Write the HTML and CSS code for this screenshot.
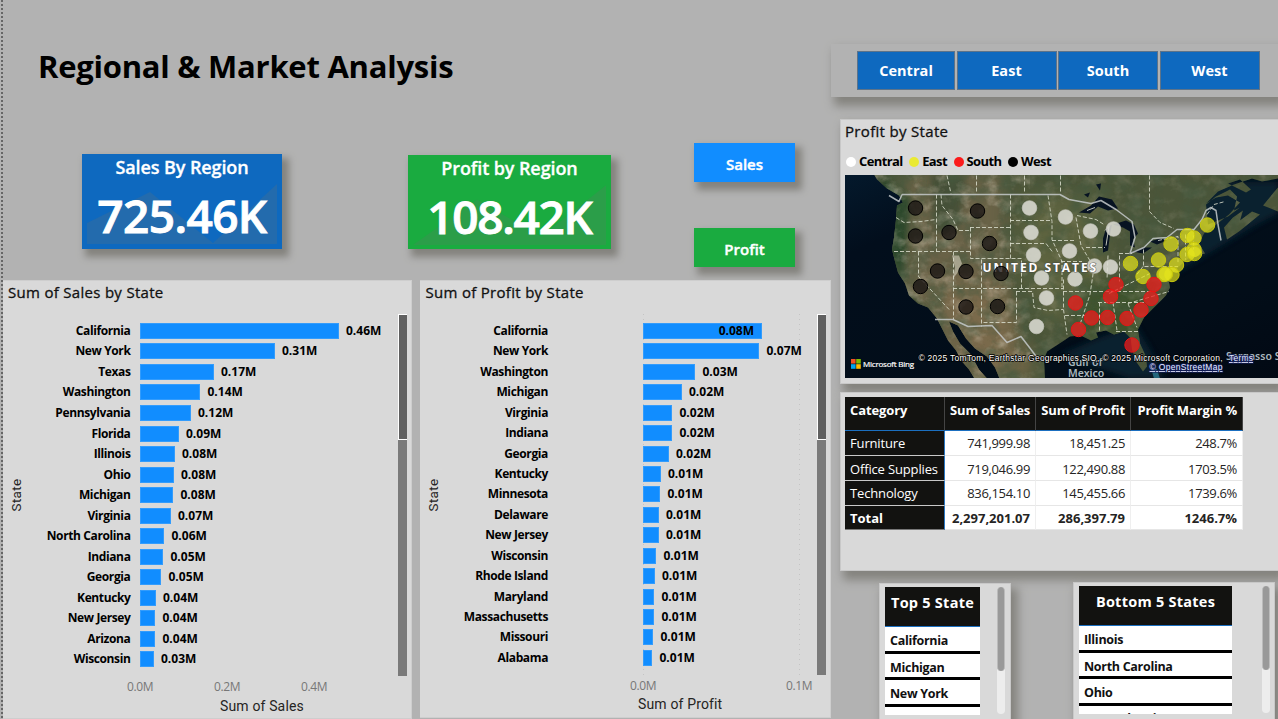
FILE: index.html
```html
<!DOCTYPE html>
<html lang="en">
<head>
<meta charset="utf-8">
<title>Regional &amp; Market Analysis</title>
<link rel="stylesheet" href="styles.css">
</head>
<body>
<div class="report">
  <main class="left">
    <header class="top">
      <h1 class="title">Regional &amp; Market Analysis</h1>
      <div class="kpis">
        <section class="kpi kpi-sales">
          <svg class="trend" viewBox="0 0 200 95" preserveAspectRatio="none"><path d="M5 69 L68 38 L131 89 L195 30 V90 H5Z" fill="#236bad"/></svg>
          <h2 class="kpi-name">Sales By Region</h2>
          <p class="kpi-value">725.46K</p>
        </section>
        <section class="kpi kpi-profit">
          <svg class="trend" viewBox="0 0 203 94" preserveAspectRatio="none"><path d="M5 89 L69 44 L133 81 L198 30 V89Z" fill="#2b9e49"/></svg>
          <h2 class="kpi-name">Profit by Region</h2>
          <p class="kpi-value">108.42K</p>
        </section>
        <nav class="switches">
          <a class="switch switch-sales">Sales</a>
          <a class="switch switch-profit">Profit</a>
        </nav>
      </div>
    </header>
    <div class="charts">
      <section class="chart chart-sales">
        <h2 class="panel-title">Sum of Sales by State</h2>
        <div class="plot">
          <div class="y-name"><span>State</span></div>
          <div class="rows">
            <div class="row"><span class="state">California</span><i class="bar" style="width:199px"></i><b class="num">0.46M</b></div>
            <div class="row"><span class="state">New York</span><i class="bar" style="width:135px"></i><b class="num">0.31M</b></div>
            <div class="row"><span class="state">Texas</span><i class="bar" style="width:74px"></i><b class="num">0.17M</b></div>
            <div class="row"><span class="state">Washington</span><i class="bar" style="width:60.5px"></i><b class="num">0.14M</b></div>
            <div class="row"><span class="state">Pennsylvania</span><i class="bar" style="width:51px"></i><b class="num">0.12M</b></div>
            <div class="row"><span class="state">Florida</span><i class="bar" style="width:39px"></i><b class="num">0.09M</b></div>
            <div class="row"><span class="state">Illinois</span><i class="bar" style="width:35px"></i><b class="num">0.08M</b></div>
            <div class="row"><span class="state">Ohio</span><i class="bar" style="width:34px"></i><b class="num">0.08M</b></div>
            <div class="row"><span class="state">Michigan</span><i class="bar" style="width:33.5px"></i><b class="num">0.08M</b></div>
            <div class="row"><span class="state">Virginia</span><i class="bar" style="width:31px"></i><b class="num">0.07M</b></div>
            <div class="row"><span class="state">North Carolina</span><i class="bar" style="width:24.5px"></i><b class="num">0.06M</b></div>
            <div class="row"><span class="state">Indiana</span><i class="bar" style="width:23.5px"></i><b class="num">0.05M</b></div>
            <div class="row"><span class="state">Georgia</span><i class="bar" style="width:21.5px"></i><b class="num">0.05M</b></div>
            <div class="row"><span class="state">Kentucky</span><i class="bar" style="width:16px"></i><b class="num">0.04M</b></div>
            <div class="row"><span class="state">New Jersey</span><i class="bar" style="width:15.5px"></i><b class="num">0.04M</b></div>
            <div class="row"><span class="state">Arizona</span><i class="bar" style="width:15.5px"></i><b class="num">0.04M</b></div>
            <div class="row"><span class="state">Wisconsin</span><i class="bar" style="width:14px"></i><b class="num">0.03M</b></div>
          </div>
          <div class="scroll"><div class="thumb"></div></div>
        </div>
        <div class="ticks"><span>0.0M</span><span>0.2M</span><span>0.4M</span></div>
        <div class="x-name">Sum of Sales</div>
      </section>
      <section class="chart chart-profit">
        <h2 class="panel-title">Sum of Profit by State</h2>
        <div class="plot">
          <div class="y-name"><span>State</span></div>
          <div class="rows">
            <div class="row"><span class="state">California</span><i class="bar bar-labelled" style="width:119px"><b class="num">0.08M</b></i></div>
            <div class="row"><span class="state">New York</span><i class="bar" style="width:116px"></i><b class="num">0.07M</b></div>
            <div class="row"><span class="state">Washington</span><i class="bar" style="width:52px"></i><b class="num">0.03M</b></div>
            <div class="row"><span class="state">Michigan</span><i class="bar" style="width:38.5px"></i><b class="num">0.02M</b></div>
            <div class="row"><span class="state">Virginia</span><i class="bar" style="width:29px"></i><b class="num">0.02M</b></div>
            <div class="row"><span class="state">Indiana</span><i class="bar" style="width:29px"></i><b class="num">0.02M</b></div>
            <div class="row"><span class="state">Georgia</span><i class="bar" style="width:25.5px"></i><b class="num">0.02M</b></div>
            <div class="row"><span class="state">Kentucky</span><i class="bar" style="width:17.5px"></i><b class="num">0.01M</b></div>
            <div class="row"><span class="state">Minnesota</span><i class="bar" style="width:17px"></i><b class="num">0.01M</b></div>
            <div class="row"><span class="state">Delaware</span><i class="bar" style="width:15.5px"></i><b class="num">0.01M</b></div>
            <div class="row"><span class="state">New Jersey</span><i class="bar" style="width:15.5px"></i><b class="num">0.01M</b></div>
            <div class="row"><span class="state">Wisconsin</span><i class="bar" style="width:13px"></i><b class="num">0.01M</b></div>
            <div class="row"><span class="state">Rhode Island</span><i class="bar" style="width:11.5px"></i><b class="num">0.01M</b></div>
            <div class="row"><span class="state">Maryland</span><i class="bar" style="width:11px"></i><b class="num">0.01M</b></div>
            <div class="row"><span class="state">Massachusetts</span><i class="bar" style="width:11px"></i><b class="num">0.01M</b></div>
            <div class="row"><span class="state">Missouri</span><i class="bar" style="width:10px"></i><b class="num">0.01M</b></div>
            <div class="row"><span class="state">Alabama</span><i class="bar" style="width:9px"></i><b class="num">0.01M</b></div>
          </div>
          <div class="scroll"><div class="thumb"></div></div>
        </div>
        <div class="ticks"><span>0.0M</span><span>0.1M</span></div>
        <div class="x-name">Sum of Profit</div>
      </section>
    </div>
  </main>

  <aside class="right">
    <nav class="slicer">
      <a class="tile">Central</a><a class="tile">East</a><a class="tile">South</a><a class="tile">West</a>
    </nav>
    <section class="panel map-panel">
      <h2 class="panel-title">Profit by State</h2>
      <ul class="legend">
        <li class="key-central">Central</li><li class="key-east">East</li><li class="key-south">South</li><li class="key-west">West</li>
      </ul>
      <svg class="map" viewBox="845 175.500 433 203" width="433" height="203">
        <defs>
          <filter id="terrain" x="0" y="0" width="100%" height="100%">
            <feTurbulence type="fractalNoise" baseFrequency=".055 .06" numOctaves="5" seed="11"/>
            <feColorMatrix values="0 0 0 0 .06  0 0 0 0 .1  0 0 0 0 .05  2.2 0 0 0 -.85"/>
          </filter>
          <filter id="dust" x="0" y="0" width="100%" height="100%">
            <feTurbulence type="fractalNoise" baseFrequency=".07 .08" numOctaves="4" seed="4"/>
            <feColorMatrix values="0 0 0 0 .6  0 0 0 0 .54  0 0 0 0 .42  0 2.4 0 0 -1.1"/>
          </filter>
          <filter id="soft"><feGaussianBlur stdDeviation="9"/></filter>
          <filter id="coast"><feGaussianBlur stdDeviation="3"/></filter>
          <linearGradient id="sea" x1="0" y1="0" x2="1" y2="1">
            <stop offset="0" stop-color="#04192c"/><stop offset=".2" stop-color="#020e1c"/><stop offset=".75" stop-color="#020d18"/><stop offset="1" stop-color="#020914"/>
          </linearGradient>
          <path id="landshape" d="M871 170 L877 180 L887 189 L899 196 L903 203 L897 206 L896 220 L894 238 L892 250 L895 262 L898 273 L905 284 L909 296 L918 304 L928 308 L937 319 L942 329 L948 341 L956 351 L962 362 L969 370 L975 380 H988 L979 370 L970 354 L960 344 L953 332 L949 322 L958 326 L966 339 L975 349 L987 357 L995 368 L1000 380 H1045 L1044 360 L1047 352 L1058 345 L1070 337 L1081 336 L1091 341 L1098 338 L1096 333 L1106 331 L1114 335 L1124 332 L1131 339 L1132 350 L1136 362 L1143 372 L1147 367 L1146 357 L1140 344 L1138 330 L1144 318 L1153 309 L1166 296 L1170 288 L1168 278 L1178 268 L1188 259 L1205 254 L1199 244 L1204 234 L1215 226 L1229 215 L1240 203 L1228 196 L1216 198 L1206 204 L1218 192 L1234 185 L1252 179 L1262 182 L1278 179 V170Z M1224 228 L1233 218 L1243 211 L1240 221 L1252 212 L1260 215 L1239 232 L1227 240Z M1216 197 L1230 190 L1237 197 L1234 211 L1240 208 L1228 217 L1208 225 L1206 205Z M1228 184 L1240 180 L1251 190 L1246 193Z M1263 206 L1278 188 V212Z"/>
          <clipPath id="land"><use href="#landshape"/></clipPath>
        </defs>
        <rect x="845" y="175" width="433" height="204" fill="url(#sea)"/>
        <path d="M1175 274 L1205 256 L1255 226 L1278 214 V182 H1200Z M1135 325 L1150 350 L1165 379 H1130 L1060 355 L1100 338Z" fill="#0a2735" opacity=".8" filter="url(#coast)"/>
        <path d="M1150 365 L1157 370 L1160 379 H1154Z" fill="#2f86a0" opacity=".7"/>
        <use href="#landshape" fill="#4b5539"/>
        <g clip-path="url(#land)">
          <path d="M905 170 H1005 L1012 379 H950 L900 290Z" fill="#77694e" opacity=".7" filter="url(#soft)"/>
          <path d="M925 280 H1000 L1040 379 H980Z" fill="#86704f" opacity=".6" filter="url(#soft)"/>
          <path d="M880 176 L910 200 L902 290 L940 318 L908 300 L888 250Z" fill="#2a4629" filter="url(#coast)"/>
          <path d="M930 176 L965 176 L960 225 L935 235Z" fill="#394a30" opacity=".7" filter="url(#coast)"/>
          <path d="M1025 195 H1100 L1110 270 L1050 330 L1015 260Z" fill="#6f7247" opacity=".5" filter="url(#soft)"/>
          <path d="M1080 290 L1150 280 L1140 340 L1080 335Z" fill="#3c522c" filter="url(#soft)"/>
          <rect x="845" y="175" width="185" height="204" filter="url(#dust)" opacity=".45"/>
          <rect x="1030" y="175" width="248" height="204" filter="url(#dust)" opacity=".22"/>
          <rect x="845" y="175" width="433" height="204" filter="url(#terrain)" opacity=".68"/>
          <path d="M952 256 L959 256 L962 264 L957 274 L953 279 L955 268Z" fill="#bfb9a6" opacity=".75"/>
          <path d="M1079 213 L1091 206 L1099 197 L1112 200 L1118 209 L1108 211 L1098 207 L1090 214Z M1106 229 L1112 225 L1110 235 L1108 251 L1103 253 L1103 239Z M1113 225 L1126 221 L1134 225 L1138 234 L1133 240 L1135 248 L1130 246 L1130 232 L1123 228Z M1132 252 L1144 248 L1152 248 L1143 254Z M1150 242 L1160 239 L1167 241 L1157 245Z M1096 185 L1101 184 L1100 191Z M1084 195 L1090 193 L1088 198Z" fill="#071322"/>
          <path d="M1105 231 L1109 227 L1106 246 M1087 211 L1095 208" stroke="#eceddf" stroke-width="1" fill="none" opacity=".8"/>
        </g>
        <g fill="none" stroke="#d8dccb" stroke-width="1" stroke-dasharray="4 2" opacity=".85">
          <path d="M896 218 L904 223 L921 222 L936 220 M894 252 H970 M918.500 252 V277 L950 311 M936.500 195 V252 M953.500 252 V320 M953 289 H1063 M970.500 228 V259 H1021.500 V289 M970 228 H1010 M941 195 L942 206 L953 220 L958 231 L970 231 M947 176 L951 194 M976.500 176 V194 M981.500 260 V327 M1010.500 195 V259 M1010 221 H1051 M1010 244 H1046 L1053 253 M1024.500 176 V194 M1048 196 L1052 222 V240 L1062 262 V290 M1016.500 292 V323 H983 M1016 292 H1032.500 L1034 308 L1048 311 L1063 310 M1052 241 H1076 M1061 262 H1082 M1063.500 280 V310 L1067 335 M1063 292 H1152 M1065 316 H1085 M1076 218 L1081 246 L1094 268 L1090 295 L1080 325 M1077 216 L1096 220 L1104 225 M1086 248 H1105 M1108 256 L1107 280 M1119.500 256 V282 M1119 254 H1132 M1143.500 250 V267 H1178 M1158 241 L1178 237 V263 M1098 303 H1145 M1099.500 303 V331 M1113 303 L1117 331 M1128 304 L1137 328 M1116 332 H1138 M1109 294 L1150 274 M1128 304 L1169 292 M1143 267 L1136 276 M1149.500 176 V212 L1160 223 L1174 229 M1185.500 235 V260 M1193.500 230 V250 M1207 215 L1214 205 L1225 202 M1060.500 176 V194"/>
        </g>
        <g fill="none" stroke="#c6cacb" stroke-width="1.5" opacity=".85" stroke-linejoin="round">
          <path d="M902 195 H1060 L1069 200 L1091 204 L1101 201 L1116 210 L1132 222 L1135 238 L1130 254 L1144 248 L1153 239 L1167 238 L1177 230 H1194 L1202 220 L1206 211 L1211 208 L1216 211 L1218 225 L1221 241 M935 320 L953 320 L968 327 L992 326 L1007 343 L1021 337 L1031 350 L1037 358 M902 195 L899 202 L889 196"/>
        </g>
        <g class="places">
          <text x="1068" y="366">Gulf of</text><text x="1068" y="377.500">Mexico</text><text x="1226" y="360">Sargasso S</text>
        </g>
        <g class="dots-central">
          <circle cx="1029.500" cy="208.500" r="7.300"/><circle cx="1031" cy="233" r="7.300"/><circle cx="1033.500" cy="255.500" r="7.300"/><circle cx="1041.500" cy="278.500" r="7.300"/><circle cx="1046.500" cy="298.500" r="7.300"/><circle cx="1036.500" cy="327" r="7.300"/><circle cx="1065.500" cy="217.500" r="7.300"/><circle cx="1090.500" cy="231.500" r="7.300"/><circle cx="1113.500" cy="229.500" r="7.300"/><circle cx="1069.500" cy="251.500" r="7.300"/><circle cx="1094.500" cy="266.500" r="7.300"/><circle cx="1110.500" cy="267.500" r="7.300"/><circle cx="1075" cy="279.500" r="7.300"/>
        </g>
        <text x="982.5" y="272.5" textLength="114" class="country">UNITED STATES</text>
        <g class="dots-west">
          <circle cx="915.500" cy="208.500" r="7.200"/><circle cx="977.500" cy="211.500" r="7.200"/><circle cx="915.500" cy="236.500" r="7.200"/><circle cx="949" cy="233" r="7.200"/><circle cx="989.500" cy="244" r="7.200"/><circle cx="937.500" cy="271.500" r="7.200"/><circle cx="966" cy="272" r="7.200"/><circle cx="1001" cy="274" r="7.200"/><circle cx="920.500" cy="287" r="7.200"/><circle cx="966" cy="307.500" r="7.200"/><circle cx="997.500" cy="307" r="7.200"/>
        </g>
        <g class="dots-east">
          <circle cx="1207.500" cy="225.500" r="7.200"/><circle cx="1194" cy="238.500" r="7.200"/><circle cx="1187.500" cy="236" r="7.200"/><circle cx="1171" cy="244.500" r="7.200"/><circle cx="1130.500" cy="264" r="7.200"/><circle cx="1158.500" cy="260.500" r="7.200"/><circle cx="1187" cy="255" r="7.200"/><circle cx="1194" cy="250" r="7.200"/><circle cx="1194.500" cy="254" r="7.200"/><circle cx="1176.500" cy="265.500" r="7.200"/><circle cx="1143" cy="277" r="7.200"/><circle cx="1172" cy="275" r="7.200"/><circle cx="1164" cy="275" r="7.200"/><circle cx="1165.500" cy="274.500" r="7.200"/>
        </g>
        <g class="dots-south">
          <circle cx="1116" cy="285" r="7.200"/><circle cx="1110.500" cy="297" r="7.200"/><circle cx="1154" cy="285" r="7.200"/><circle cx="1151" cy="299" r="7.200"/><circle cx="1141" cy="310.500" r="7.200"/><circle cx="1127" cy="319" r="7.200"/><circle cx="1107.500" cy="318" r="7.200"/><circle cx="1091.500" cy="318.500" r="7.200"/><circle cx="1075.500" cy="303.500" r="7.200"/><circle cx="1078.500" cy="330" r="7.200"/><circle cx="1132" cy="345.500" r="7.200"/>
        </g>
        <path d="M851 359.500h4.600v4.600h-4.600z" fill="#f25022"/><path d="M856.200 359.500h4.600v4.600h-4.600z" fill="#7fba00"/><path d="M851 364.700h4.600v4.600h-4.600z" fill="#00a4ef"/><path d="M856.200 364.700h4.600v4.600h-4.600z" fill="#ffb900"/>
        <text x="863" y="367.5" textLength="51" class="bing">Microsoft Bing</text>
        <g class="credit">
          <text x="918.5" y="361.5" textLength="304">© 2025 TomTom, Earthstar Geographics SIO, © 2025 Microsoft Corporation,</text>
          <text x="1229" y="361.5" textLength="24" class="link">Terms</text>
          <text x="1149.500" y="370.5" textLength="73" class="link">© OpenStreetMap</text>
        </g>
      </svg>
    </section>
    <section class="panel table-panel">
      <table class="totals">
        <thead><tr><th>Category</th><th>Sum of Sales</th><th>Sum of Profit</th><th>Profit Margin %</th></tr></thead>
        <tbody>
          <tr><th>Furniture</th><td>741,999.98</td><td>18,451.25</td><td>248.7%</td></tr>
          <tr class="tall"><th>Office Supplies</th><td>719,046.99</td><td>122,490.88</td><td>1703.5%</td></tr>
          <tr><th>Technology</th><td>836,154.10</td><td>145,455.66</td><td>1739.6%</td></tr>
          <tr class="sum"><th>Total</th><td>2,297,201.07</td><td>286,397.79</td><td>1246.7%</td></tr>
        </tbody>
      </table>
    </section>
    <div class="ranks">
      <section class="rank rank-top">
        <div class="list"><h3>Top 5 State</h3><p>California</p><p>Michigan</p><p>New York</p><p></p></div>
        <div class="rail"><div class="grip"></div></div>
      </section>
      <section class="rank rank-bottom">
        <div class="list"><h3>Bottom 5 States</h3><p>Illinois</p><p>North Carolina</p><p>Ohio</p><p>Pennsylvania</p></div>
        <div class="rail"><div class="grip"></div></div>
      </section>
    </div>
  </aside>
</div>
</body>
</html>
```
FILE: styles.css
```css
* { box-sizing: border-box; }
html, body { height: 100%; }
body {
  margin: 0;
  overflow: hidden;
  font-family: "Open Sans", "Noto Sans", sans-serif;
  color: #111;
  background: #b2b2b2;
}
h1, h2, h3, p, ul { margin: 0; padding: 0; font-weight: normal; }
.report {
  display: flex;
  width: 1278px;
  height: 719px;
  overflow: hidden;
  background: repeating-linear-gradient(#666 0 2px, transparent 2px 4px) 1px 0 / 2px 100% no-repeat;
}

/* Left column */
.left { width: 831px; flex: none; display: flex; flex-direction: column; }
.top { height: 280px; padding-left: 38px; }
.title { height: 143px; padding-top: 44px; font-size: 31px; line-height: 44px; font-weight: 700; color: #000; letter-spacing: -.25px; white-space: nowrap; }
.kpis { display: flex; align-items: flex-start; padding-left: 44px; }
.kpi { display: grid; text-align: center; color: #fff; box-shadow: 5px 6px 7px 2px #84837e; grid-template-rows: 28px 1fr; }
.kpi > * { grid-column: 1; }
.trend { grid-row: 1 / 3; width: 100%; height: 100%; }
.kpi-sales { width: 200px; height: 95px; margin-top: 11px; background: #0e69bf; }
.kpi-profit { width: 203px; height: 94px; margin: 12px 0 0 126px; background: #1aab40; }
.kpi-name { grid-row: 1; font-size: 18px; line-height: 27px; font-weight: 600; letter-spacing: -.1px; z-index: 1; -webkit-text-stroke: .3px #fff; }
.kpi-value { grid-row: 2; font-size: 46px; line-height: 67px; font-weight: 600; letter-spacing: -.6px; z-index: 1; -webkit-text-stroke: .9px #fff; }
.kpi-profit .kpi-value { letter-spacing: -1.3px; }
.switches { display: flex; flex-direction: column; gap: 46px; margin-left: 83px; }
.switch { width: 101px; height: 39px; color: #fff; font-size: 15px; font-weight: 600; line-height: 43px; text-align: center; letter-spacing: 0; box-shadow: 5px 6px 7px 2px #84837e; -webkit-text-stroke: .4px #fff; }
.switch-sales { background: #118dff; }
.switch-profit { background: #1aab40; }

.charts { display: flex; gap: 8px; flex: 1; padding-left: 3px; z-index: 1; }
.chart { height: 438px; background: #d9d9d9; border: 1px solid #cecece; border-left: 0; }
.chart-sales { width: 409px; height: 439px; }
.chart-profit { width: 411px; }
.panel-title { font-size: 15px; line-height: 22px; letter-spacing: .3px; color: #111; white-space: nowrap; -webkit-text-stroke: .3px #111; }
.chart .panel-title { height: 33px; padding: 0 5px; }
.chart-profit .panel-title { padding-left: 5.500px; }
.plot { display: flex; height: 362px; }
.y-name { width: 26px; margin-right: -6px; display: flex; align-items: center; justify-content: center; font: 13.5px Roboto, sans-serif; color: #252423; }
.y-name span { transform: rotate(-90deg); white-space: nowrap; letter-spacing: .3px; }
.rows { flex: 1; padding-top: 6.700px; }
.row { display: flex; align-items: center; height: 20.530px; }
.chart-profit .row { height: 20.450px; }
.state { width: 107.5px; text-align: right; font-size: 12px; font-weight: 700; letter-spacing: -.38px; white-space: nowrap; margin-right: 9px; color: #000; line-height: 18px; }
.bar { height: 16px; background: #118dff; outline: 1px solid rgba(80, 170, 250, .55); outline-offset: -1px; flex: none; }
.num { font-size: 12px; font-weight: 700; letter-spacing: 0; margin-left: 7.500px; color: #000; line-height: 18px; }
.bar-labelled { display: flex; align-items: center; justify-content: flex-end; padding-right: 8px; font-style: normal; }
.scroll { width: 9px; margin-right: 4px; background: #7a7a7a; flex: none; }
.thumb { height: 126px; background: #606060; border: 1px solid #fff; border-right: 0; }
.chart-profit .plot { height: 361px; }
.chart-profit .state { width: 108px; margin-right: 95px; letter-spacing: -.38px; }
.chart-profit .rows { background: repeating-linear-gradient(#c4c4c4 0 1px, transparent 1px 5px) 203px 0 / 1px 100% no-repeat, repeating-linear-gradient(#c4c4c4 0 1px, transparent 1px 5px) 359px 0 / 1px 100% no-repeat; }
.ticks { display: flex; font-size: 12px; line-height: 20px; padding-top: 1px; color: #777; letter-spacing: -.4px; padding-left: 116px; }
.ticks span { flex: none; width: 42px; text-align: center; margin-right: 45px; }
.chart-profit .ticks { padding-left: 202px; }
.chart-profit .ticks span { margin-right: 114px; }
.chart-profit .ticks span:last-child { margin-right: 0; }
.x-name { font: 14px/18px Roboto, sans-serif; color: #252423; letter-spacing: .15px; padding: 0 0 0 217px; white-space: nowrap; }
.chart-profit .x-name { padding-left: 218px; margin-top: -1px; }

/* Right column */
.right { width: 447px; flex: none; padding-top: 44px; display: flex; flex-direction: column; }
.right > * { flex: none; }
.slicer { display: grid; grid-template-columns: 98px 100px 100px 100px; gap: 1.5px; height: 53px; padding: 7px 0 7px 26px; background: #b2b2b2; box-shadow: 5px 7px 9px 2px #84837e; }
.tile { background: #0e69bf; border: 1px solid #5d7389; color: #fff; font-size: 14.500px; line-height: 37px; font-weight: 700; text-align: center; letter-spacing: .05px; }
.panel { margin-left: 9px; background: #d9d9d9; border: 1px solid #c8c8c8; border-right: 0; }
.map-panel { height: 265px; margin-top: 22px; padding: 0 0 0 4px; box-shadow: 5px 7px 9px 2px #84837e; }
.map-panel .panel-title { height: 32px; letter-spacing: .32px; }
.legend { display: flex; list-style: none; height: 23px; font-size: 13px; line-height: 19px; font-weight: 700; letter-spacing: -.6px; color: #000; }
.legend li { display: flex; align-items: center; height: 19px; margin-right: 5.500px; }
.legend li::before { content: ""; width: 10px; height: 10px; border-radius: 50%; margin: 0 3px 0 1px; background: currentColor; }
.key-central::before { background: #fff !important; }
.key-east::before { background: #eaea33 !important; }
.key-south::before { background: #fb1b1b !important; }
.map { display: block; }
.places { font: 600 10.500px "Noto Sans", sans-serif; fill: #a9b7bd; }
.country { font-size: 12px; font-weight: 700; fill: #fff; stroke: #444; stroke-opacity: .7; stroke-width: 1.200px; paint-order: stroke; letter-spacing: .3px; }
.dots-west { fill: #1a1513; fill-opacity: .78; stroke: #000; }
.dots-central { fill: #dcdcd4; fill-opacity: .87; stroke: #c9c9c2; stroke-width: .7; }
.dots-east { fill: #e4e41c; fill-opacity: .7; stroke: #c8c80c; }
.dots-south { fill: #f01c1c; fill-opacity: .74; stroke: #e81515; }
.bing { font: 8px "Open Sans", sans-serif; fill: #fff; stroke: #fff; stroke-width: .2px; }
.credit { font: 8.500px "Liberation Sans", Arial, sans-serif; fill: #fff; stroke: #000; stroke-width: 1.400px; paint-order: stroke; }
.link { text-decoration: underline; fill: #e7e9ff; stroke: #14205c; }

.table-panel { height: 179px; margin-top: 8px; padding: 4px 0 0 4px; box-shadow: 5px 7px 9px 2px #84837e; }
.totals { border-collapse: separate; border-spacing: 0; table-layout: fixed; width: 398px; background: #fff; font-size: 13px; letter-spacing: -.35px; color: #252423; }
.totals th, .totals td { padding: 0 5px; height: 25px; line-height: 20px; white-space: nowrap; }
.totals .tall > * { padding-top: 2px; }
.totals .sum > * { height: 24px; }
.totals td { text-align: right; border-bottom: 1px solid #e6e6e6; border-right: 1px solid #efefef; }
.totals tbody th { text-align: left; font-weight: 400; color: #fff; background: #121210; border-bottom: 1px solid #c8c8c8; border-right: 1px solid #2b78c4; letter-spacing: -.15px; }
.totals thead th { height: 34px; padding-bottom: 8px; background: #121210; color: #fff; font-weight: 700; border-bottom: 1px solid #1b6fc0; border-right: 1px solid #444; text-align: right; letter-spacing: -.1px; }
.totals thead th:first-child { width: 100px; text-align: left; }
.totals thead th:nth-child(2) { width: 91px; }
.totals thead th:nth-child(3) { width: 95px; }
.totals .sum > * { font-weight: 700; letter-spacing: 0; }
.totals .sum th { border-bottom-color: #777; }

.ranks { display: flex; align-items: flex-start; gap: 62px; padding: 11px 0 0 48px; z-index: 1; }
.rank { display: flex; height: 150px; background: #d9d9d9; border: 1px solid #c8c8c8; box-shadow: 5px 7px 9px 2px #84837e; }
.rank-top { width: 132px; margin-top: 1px; padding: 3px 5px 0; }
.rank-bottom { width: 202px; padding: 3px 4px 0 5px; }
.list { height: 128px; overflow: hidden; background: #fff; }
.rank-top .list { width: 95px; }
.rank-bottom .list { width: 153px; }
.list h3 { height: 40px; padding-top: 5px; background: #121210; color: #fff; border-bottom: 1px solid #1b6fc0; font-size: 14.500px; line-height: 22px; font-weight: 700; text-align: center; letter-spacing: .25px; white-space: nowrap; }
.list p { height: 26.500px; padding: 3px 5px 0; border-bottom: 3px solid #000; font-size: 12.500px; line-height: 21px; font-weight: 700; letter-spacing: -.3px; white-space: nowrap; }
.list p:last-child { padding-top: 2px; }
.rail { width: 8px; height: 127px; margin-left: auto; border-radius: 4px; background: #ededed; }
.grip { height: 84px; border-radius: 4px; background: #999; border: 1px solid #bbb; border-width: 0 1px; }
```
